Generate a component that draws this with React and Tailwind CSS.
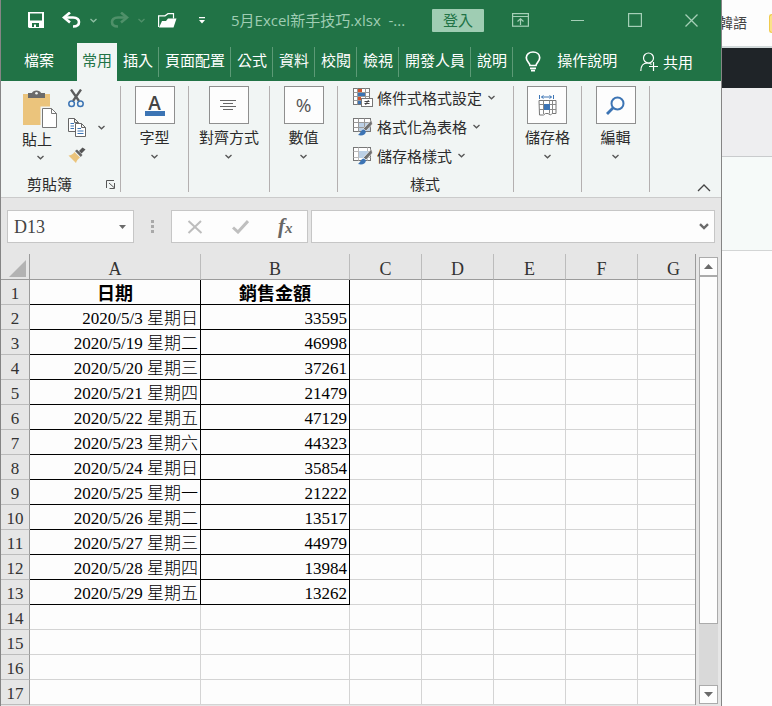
import React, { useState } from 'react';

const tabs = ['插入', '頁面配置', '公式', '資料', '校閱', '檢視', '開發人員', '說明'];

const rows = [
  ['2020/5/3 星期日', '33595'],
  ['2020/5/19 星期二', '46998'],
  ['2020/5/20 星期三', '37261'],
  ['2020/5/21 星期四', '21479'],
  ['2020/5/22 星期五', '47129'],
  ['2020/5/23 星期六', '44323'],
  ['2020/5/24 星期日', '35854'],
  ['2020/5/25 星期一', '21222'],
  ['2020/5/26 星期二', '13517'],
  ['2020/5/27 星期三', '44979'],
  ['2020/5/28 星期四', '13984'],
  ['2020/5/29 星期五', '13262'],
];

const emptyRows = [14, 15, 16, 17];
const emptyCols = ['C', 'D', 'E', 'F', 'G'];

function Chevron({ className = 'text-[#555]' }) {
  return (
    <svg width="7" height="5" viewBox="0 0 7 5" fill="none" stroke="currentColor" strokeWidth="1.3" className={className}>
      <path d="M0.5 1 L3.5 3.8 L6.5 1" />
    </svg>
  );
}

/* Quick access icons */
function SaveIcon() {
  return (
    <svg width="16" height="16" viewBox="0 0 16 16">
      <path fill="#fff" fillRule="evenodd" d="M0 0 H16 V16 H1 L0 15 Z M2 1.5 V8.5 H14 V1.5 Z M4 11 V15 H6 V12.5 H8 V15 H11 V11 Z" />
    </svg>
  );
}

function UndoIcon({ className }) {
  return (
    <svg width="19" height="16" viewBox="0 0 19 16" fill="none" className={className}>
      <path d="M4 5.5 H11 C15.5 5.5 17 8 17 10 C17 13 14.5 14.5 11 14.5" stroke="currentColor" strokeWidth="2.6" />
      <path d="M8 0.5 L2 5.5 L8 10.5" stroke="currentColor" strokeWidth="2.6" />
    </svg>
  );
}

function FolderIcon() {
  return (
    <svg width="19" height="15" viewBox="0 0 19 15">
      <path d="M0.6 14 V2.8 H7 L10 0.7 H15.5 V5.5" fill="none" stroke="#fff" strokeWidth="1.2" />
      <path d="M1 14.5 L4 8 L8 8 L10 5.5 H18.5 L15.5 14.5 Z" fill="#fff" />
    </svg>
  );
}

function RibbonIcon() {
  return (
    <svg width="17" height="14" viewBox="0 0 17 14" fill="none" stroke="currentColor" strokeWidth="1.2">
      <rect x="0.6" y="0.6" width="15.8" height="12.6" />
      <path d="M1 3.5 H16 M8.5 12 V6 M5.5 8.5 L8.5 5.7 L11.5 8.5" />
    </svg>
  );
}

function BulbIcon() {
  return (
    <svg width="16" height="21" viewBox="0 0 16 21" fill="none" stroke="#fff" strokeWidth="1.7">
      <path d="M5 14.5 C5 12 1.3 10.5 1.3 6.8 C1.3 3.4 4.2 1 8 1 C11.8 1 14.7 3.4 14.7 6.8 C14.7 10.5 11 12 11 14.5 Z" />
      <path d="M5 17.3 H11 M6 19.7 H10" />
    </svg>
  );
}

function ShareIcon() {
  return (
    <svg width="19" height="20" viewBox="0 0 19 20" fill="none" stroke="#fff" strokeWidth="1.2">
      <circle cx="8.5" cy="6" r="5" />
      <path d="M0.8 19 C0.8 14 3.5 11 7.5 11 C9.5 11 10.5 11.5 11.5 12.5 M13.5 10 V19 M9 14.5 H18" />
    </svg>
  );
}

/* Clipboard icons */
function PasteIcon() {
  return (
    <svg width="36" height="39" viewBox="0 0 36 39">
      <rect x="1" y="4" width="27" height="31" fill="#ebc47c" />
      <path d="M6 3 H10 C10.5 -0.5 18.5 -0.5 19 3 H23 V8 H6 Z" fill="#6b6b6b" />
      <circle cx="14.5" cy="3.2" r="1.3" fill="#f1f5f4" />
      <path d="M18.5 16.5 H30 V36 H18.5 Z" fill="#f1f5f4" />
      <path d="M20.5 18.5 H29.5 L34.5 23.5 V37.5 H20.5 Z" fill="#fff" stroke="#777" />
      <path d="M29.5 18.5 V23.5 H34.5" fill="none" stroke="#777" />
    </svg>
  );
}

function CutIcon() {
  return (
    <svg width="16" height="19" viewBox="0 0 16 19" fill="none">
      <path d="M3 0.5 L11 12 M13 0.5 L5 12" stroke="#5c5c5c" strokeWidth="2.3" />
      <circle cx="3.6" cy="14.8" r="2.8" stroke="#3c74b4" strokeWidth="1.5" />
      <circle cx="12.4" cy="14.8" r="2.8" stroke="#3c74b4" strokeWidth="1.5" />
    </svg>
  );
}

function CopyIcon() {
  return (
    <svg width="18" height="19" viewBox="0 0 18 19" fill="#fff" stroke="#666">
      <path d="M0.5 0.5 H6.5 L10.5 4.5 V13.5 H0.5 Z M6.5 0.5 V4.5 H10.5" />
      <path d="M2.5 5.5 H6 M2.5 8 H6 M2.5 10.5 H6" stroke="#3c74b4" />
      <path d="M7.5 5.5 H13.5 L17.5 9.5 V18.5 H7.5 Z M13.5 5.5 V9.5 H17.5" />
      <path d="M9.5 10.5 H13 M9.5 13 H15.5 M9.5 15.5 H15.5" stroke="#3c74b4" />
    </svg>
  );
}

function BrushIcon() {
  return (
    <svg width="18" height="16" viewBox="0 0 18 16">
      <path d="M0.5 8.5 C3 8.5 5 7 6.5 5 L12 10.5 C10 12 8.5 14 8 16 Z" fill="#ebc47c" />
      <path d="M7 4 L9 2.5 L14.5 8 L12.8 10 Z" fill="#666" />
      <path d="M11 4 L14.5 0.5 L17.5 2.5 L13.5 6.5 Z" fill="#555" />
    </svg>
  );
}

function LauncherIcon() {
  return (
    <svg width="10" height="9" viewBox="0 0 10 9" fill="none" stroke="#555">
      <path d="M0.5 8 V0.5 H8 M3 3 L8 7.5 M8.5 3 V8.5 H3.5" />
    </svg>
  );
}

/* Style icons */
function ConditionalIcon() {
  return (
    <svg width="20" height="20" viewBox="0 0 20 20">
      <rect x="0.5" y="0.5" width="16" height="16" fill="#fff" stroke="#777" />
      <path d="M0.5 4.5 H16.5 M0.5 8.5 H16.5 M0.5 12.5 H16.5 M4.5 0.5 V16.5 M12.5 0.5 V16.5" stroke="#999" fill="none" />
      <path d="M5 1 H9 V4 H5 Z M5 9 H8 V12 H5 Z" fill="#d2532d" />
      <path d="M5 5 H12 V8 H5 Z M5 13 H8 V16 H5 Z" fill="#3c74b4" />
      <rect x="8.5" y="10.5" width="11" height="8" fill="#fff" stroke="#777" />
      <path d="M11.5 13.5 H16.5 M11.5 15.5 H16.5 M15.5 12 L12.5 17" stroke="#444" />
    </svg>
  );
}

function TableBrush({ children }) {
  return (
    <svg width="20" height="20" viewBox="0 0 20 20">
      <rect x="0.5" y="1.5" width="17" height="13" fill="#fff" stroke="#777" />
      {children}
      <path d="M18.5 3 L19.5 7 L13 14 L10.5 11.5 Z" fill="#707070" stroke="#fff" strokeWidth="0.6" />
      <path d="M5 18 C7.5 16.5 7.5 13 11 12.5 L13 14.5 C12.5 18 9 19.2 5 18 Z" fill="#3c74b4" />
    </svg>
  );
}

function FormatTableIcon() {
  return (
    <TableBrush>
      <path d="M5 6 H17 V14 H5 Z" fill="#bcd0e6" />
      <path d="M0.5 5.5 H17.5 M0.5 10.5 H17.5 M5.5 1.5 V14.5 M11.5 1.5 V14.5" stroke="#999" />
    </TableBrush>
  );
}

function CellStyleIcon() {
  return (
    <TableBrush>
      <path d="M0.5 5.5 H17.5 M0.5 11.5 H17.5 M5.5 1.5 V14.5 M14.5 1.5 V14.5" stroke="#bbb" />
      <path d="M6 5 H15 V12 H6 Z" fill="#bcd0e6" />
    </TableBrush>
  );
}

/* Big button icons */
function AlignIcon() {
  return (
    <svg width="17" height="11" viewBox="0 0 17 11" stroke="#666">
      <path d="M0 0.5 H16 M3 3.5 H13 M0 6.5 H16 M3 9.5 H13" />
    </svg>
  );
}

function CellsIcon() {
  return (
    <svg width="19" height="21" viewBox="0 0 19 21" fill="none">
      <path d="M1.5 0 V4 M15.5 0 V4 M3.5 2 H13.5 M5.5 0.5 L3.5 2 L5.5 3.5 M11.5 0.5 L13.5 2 L11.5 3.5" stroke="#3c74b4" />
      <path d="M1 5.5 H18 V18.5 H14 L12.5 20 L10 18.5 H7.5 L5.5 20 H1.5 Z" fill="#fff" stroke="#777" />
      <path d="M1 9.5 H18 M1 14.5 H18 M5.5 5.5 V19 M11.5 5.5 V18.5 M14.5 5.5 V18.5" stroke="#888" />
      <rect x="6" y="9" width="6" height="6" fill="#3c74b4" />
    </svg>
  );
}

function FindIcon() {
  return (
    <svg width="19" height="19" viewBox="0 0 19 19" fill="none" stroke="#3c74b4">
      <circle cx="11.5" cy="7.5" r="6" strokeWidth="2" />
      <path d="M7.2 11.8 L1 18" strokeWidth="2.8" />
    </svg>
  );
}

function BigButton({ label, className, children }) {
  return (
    <div className={`flex flex-col items-center border-r border-[#b4b0b0] ${className}`}>
      <button type="button" className="flex flex-col items-center">
        <span className="flex h-[38px] w-10 items-center justify-center border border-[#8f8f8f] bg-[#fdfdfd]">{children}</span>
        <span className="mt-[3px] leading-5">{label}</span>
        <span className="mt-[7px]"><Chevron /></span>
      </button>
    </div>
  );
}

function StyleRow({ icon, label }) {
  return (
    <button type="button" className="flex h-[29px] items-center">
      {icon}
      <span className="ml-1 mr-1.5 leading-5">{label}</span>
      <Chevron />
    </button>
  );
}

function TitleBar() {
  return (
    <div className="flex h-10 items-center pl-4 pr-px">
      <button type="button" aria-label="儲存檔案" className="flex w-[38px] justify-center"><SaveIcon /></button>
      <button type="button" aria-label="復原" className="flex w-8 justify-center"><UndoIcon className="text-white" /></button>
      <button type="button" aria-label="復原選項" className="flex w-3 justify-center"><Chevron className="text-[#8fbfa3]" /></button>
      <button type="button" aria-label="重做" className="ml-1 flex w-8 justify-center"><UndoIcon className="-scale-x-100 text-[#4f9069]" /></button>
      <button type="button" aria-label="重做選項" className="flex w-3 justify-center"><Chevron className="text-[#4f9069]" /></button>
      <button type="button" aria-label="開啟" className="flex w-10 justify-center"><FolderIcon /></button>
      <button type="button" aria-label="自訂快速存取工具列" className="flex w-[30px] justify-center">
        <svg width="6" height="7" viewBox="0 0 6 7" fill="#fff"><path d="M0 0 H6 V1.2 H0 Z M0 3 H6 L3 6.5 Z" /></svg>
      </button>
      <h1 className="ml-3.5 min-w-0 flex-1 truncate whitespace-pre text-[15px] leading-5 text-[#9fcdb3]">5月Excel新手技巧.xlsx  -...</h1>
      <button type="button" className="mr-2 h-[23px] w-[52px] rounded-[1px] bg-[#9fcdb3] text-[15px] leading-5 text-[#217346]">登入</button>
      <div className="flex text-[#a5cfb7]">
        <button type="button" aria-label="功能區顯示選項" className="flex w-[57px] justify-center"><RibbonIcon /></button>
        <button type="button" aria-label="最小化" className="flex w-[57px] items-center justify-center">
          <svg width="13" height="13" viewBox="0 0 13 13" stroke="currentColor"><path d="M0 6.5 H13" /></svg>
        </button>
        <button type="button" aria-label="最大化" className="flex w-[57px] items-center justify-center">
          <svg width="14" height="14" viewBox="0 0 14 14" fill="none" stroke="currentColor" strokeWidth="1.2"><rect x="0.6" y="0.6" width="12.8" height="12.8" /></svg>
        </button>
        <button type="button" aria-label="關閉" className="flex w-[57px] items-center justify-center">
          <svg width="13" height="13" viewBox="0 0 13 13" stroke="currentColor" strokeWidth="1.3"><path d="M0.5 0.5 L12.5 12.5 M12.5 0.5 L0.5 12.5" /></svg>
        </button>
      </div>
    </div>
  );
}

function TabBar() {
  return (
    <nav className="flex h-[41px] items-end text-[15px] text-white">
      <button type="button" className="h-[38px] w-[76px] pb-1 leading-5">檔案</button>
      <button type="button" className="h-[38px] w-10 bg-[#f1f5f4] pb-1 leading-5 text-[#217346]">常用</button>
      <div className="flex h-[38px] items-center">
        {tabs.map((tab) => (
          <button key={tab} type="button" className="h-[30px] border-r border-[#5c9a76] pb-1 pl-1.5 pr-[5px] leading-5">{tab}</button>
        ))}
      </div>
      <button type="button" className="ml-3 flex h-[38px] items-center gap-4 pb-0.5">
        <BulbIcon />
        <span className="pb-0.5 leading-5">操作說明</span>
      </button>
      <button type="button" className="ml-auto mr-7 flex h-[38px] items-center gap-1">
        <ShareIcon />
        <span className="leading-5">共用</span>
      </button>
    </nav>
  );
}

function Ribbon() {
  return (
    <div className="flex h-[117px] border-b border-[#cbcbcb] bg-[#f1f5f4] pb-[5px] pt-[5px] text-[15px] text-[#2b2b2b]">
      <div className="flex w-[120px] flex-col justify-between border-r border-[#b4b0b0]">
        <div className="flex pl-[21px]">
          <button type="button" className="flex w-9 flex-col items-center pt-1">
            <PasteIcon />
            <span className="w-9 text-left leading-5">貼上</span>
            <span className="mt-1.5"><Chevron /></span>
          </button>
          <div className="ml-2.5 flex flex-col gap-2.5 pt-[3px]">
            <button type="button" aria-label="剪下"><CutIcon /></button>
            <button type="button" aria-label="複製" className="flex items-center gap-3"><CopyIcon /><Chevron /></button>
            <button type="button" aria-label="複製格式"><BrushIcon /></button>
          </div>
        </div>
        <div className="flex items-center justify-between pl-[26px] pr-1">
          <span className="leading-4">剪貼簿</span>
          <button type="button" aria-label="剪貼簿設定"><LauncherIcon /></button>
        </div>
      </div>
      <BigButton label="字型" className="w-[68px]">
        <span className="flex flex-col items-center">
          <b className="font-['Open_Sans'] text-[19px] font-semibold leading-4 text-[#444]">A</b>
          <span className="h-[5px] w-5 bg-[#3c74b4]" />
        </span>
      </BigButton>
      <BigButton label="對齊方式" className="w-[81px]"><AlignIcon /></BigButton>
      <BigButton label="數值" className="w-[68px]">
        <span className="font-['Open_Sans'] text-[19px] leading-5 text-[#555]">%</span>
      </BigButton>
      <div className="flex w-[176px] flex-col justify-between border-r border-[#b4b0b0] pl-[15px]">
        <div className="-mt-[3px] flex flex-col items-start">
          <StyleRow icon={<ConditionalIcon />} label="條件式格式設定" />
          <StyleRow icon={<FormatTableIcon />} label="格式化為表格" />
          <StyleRow icon={<CellStyleIcon />} label="儲存格樣式" />
        </div>
        <span className="pr-4 text-center leading-4">樣式</span>
      </div>
      <BigButton label="儲存格" className="w-[68px]"><CellsIcon /></BigButton>
      <BigButton label="編輯" className="w-[68px]"><FindIcon /></BigButton>
      <button type="button" aria-label="摺疊功能區" className="ml-auto mr-2.5 self-end">
        <svg width="14" height="8" viewBox="0 0 14 8" fill="none" stroke="#444" strokeWidth="1.3"><path d="M1 7 L7 1 L13 7" /></svg>
      </button>
    </div>
  );
}

function FormulaBar() {
  const [cell, setCell] = useState('D13');
  const [formula, setFormula] = useState('');

  return (
    <div className="flex items-center pb-[11px] pl-1.5 pr-1.5 pt-3">
      <div className="flex h-[33px] w-[127px] items-center border border-[#c6c6c6] bg-[#fdfdfd] pl-1.5 pr-[7px]">
        <input
          aria-label="名稱方塊"
          value={cell}
          onChange={(e) => setCell(e.target.value)}
          className="min-w-0 flex-1 bg-transparent pt-0.5 font-['Liberation_Serif'] text-[18px] text-[#444] outline-none"
        />
        <button type="button" aria-label="名稱清單">
          <svg width="7" height="4" viewBox="0 0 7 4" fill="#6a6a6a"><path d="M0 0 H7 L3.5 4 Z" /></svg>
        </button>
      </div>
      <svg width="3" height="13" viewBox="0 0 3 13" fill="#a9a9a9" className="mx-[17px]">
        <path d="M0 0 H3 V3 H0 Z M0 5 H3 V8 H0 Z M0 10 H3 V13 H0 Z" />
      </svg>
      <div className="flex h-[33px] w-[137px] items-center justify-around border border-[#c6c6c6] bg-[#fdfdfd]">
        <button type="button" aria-label="取消">
          <svg width="16" height="14" viewBox="0 0 16 14" stroke="#bdbdbd" strokeWidth="2"><path d="M1.5 1 L14.5 13 M14 1 L1.5 13" /></svg>
        </button>
        <button type="button" aria-label="輸入">
          <svg width="17" height="14" viewBox="0 0 17 14" fill="none" stroke="#bfbfbf" strokeWidth="3"><path d="M1 7.5 L6 12 L16 1" /></svg>
        </button>
        <button type="button" className="font-['Liberation_Serif'] text-[21px] font-bold italic leading-5 text-[#666]">
          f<span className="text-[15px]">x</span>
        </button>
      </div>
      <div className="ml-[3px] flex h-[33px] flex-1 items-center border border-[#c6c6c6] bg-[#fdfdfd] pr-[5px]">
        <input
          aria-label="資料編輯列"
          value={formula}
          onChange={(e) => setFormula(e.target.value)}
          className="min-w-0 flex-1 bg-transparent px-1 outline-none"
        />
        <button type="button" aria-label="展開資料編輯列">
          <svg width="10" height="7" viewBox="0 0 10 7" fill="none" stroke="#6a6a6a" strokeWidth="2.4"><path d="M1 1.2 L5 5 L9 1.2" /></svg>
        </button>
      </div>
    </div>
  );
}

function RowHeader({ n }) {
  return (
    <th scope="row" className="border-b border-r border-b-[#bcbcbc] border-r-[#9b9b9b] bg-[#e6e6e6] pt-1 font-normal text-[#333]">{n}</th>
  );
}

function EmptyCells({ cols }) {
  return cols.map((c) => <td key={c} className="border-b border-r border-[#d4d4d4]" />);
}

function Sheet() {
  return (
    <div className="min-w-0 flex-1 overflow-hidden border-r border-[#9b9b9b]">
      <table className="w-[709px] table-fixed border-separate border-spacing-0 bg-[#fdfdfd] font-['Liberation_Serif','Noto_Sans_CJK_TC',serif] text-[17px] leading-5 text-black">
        <colgroup>
          <col className="w-[29px]" />
          <col className="w-[171px]" />
          <col className="w-[149px]" />
          {emptyCols.map((c) => <col key={c} className="w-[72px]" />)}
        </colgroup>
        <thead>
          <tr className="h-[26px] bg-[#e6e6e6] text-[18px] text-[#333]">
            <td className="border-b border-r border-[#9b9b9b]">
              <svg width="17" height="17" viewBox="0 0 17 17" fill="#b3b3b3" className="ml-2 mt-1"><path d="M17 0 V17 H0 Z" /></svg>
            </td>
            {['A', 'B', ...emptyCols].map((c) => (
              <th key={c} scope="col" className="border-b border-r border-b-[#9b9b9b] border-r-[#bcbcbc] pt-1 font-normal">{c}</th>
            ))}
          </tr>
        </thead>
        <tbody>
          <tr className="h-[25px]">
            <RowHeader n={1} />
            <td className="border-b border-r border-black pt-1 text-center text-[18px] font-bold">日期</td>
            <td className="border-b border-r border-black pt-1 text-center text-[18px] font-bold">銷售金額</td>
            <EmptyCells cols={emptyCols} />
          </tr>
          {rows.map(([date, amount], i) => (
            <tr key={date} className="h-[25px]">
              <RowHeader n={i + 2} />
              <td className="whitespace-nowrap border-b border-r border-black pr-0.5 pt-1 text-right font-light">{date}</td>
              <td className="border-b border-r border-black pr-0.5 pt-1 text-right">{amount}</td>
              <EmptyCells cols={emptyCols} />
            </tr>
          ))}
          {emptyRows.map((n) => (
            <tr key={n} className="h-[25px]">
              <RowHeader n={n} />
              <EmptyCells cols={['A', 'B', ...emptyCols]} />
            </tr>
          ))}
        </tbody>
      </table>
    </div>
  );
}

function ScrollBar() {
  return (
    <div className="flex flex-col px-[3px] pb-px pt-[3px]">
      <button type="button" aria-label="向上捲動" className="flex h-[19px] w-[19px] items-center justify-center border border-[#ababab] bg-[#fdfdfd]">
        <svg width="9" height="5" viewBox="0 0 9 5" fill="#6a6a6a"><path d="M0 5 H9 L4.5 0 Z" /></svg>
      </button>
      <div className="flex flex-1 flex-col bg-[#d9d9d9]">
        <div className="h-[85%] border border-[#ababab] bg-[#fdfdfd]" />
      </div>
      <button type="button" aria-label="向下捲動" className="flex h-[19px] w-[19px] items-center justify-center border border-[#ababab] bg-[#fdfdfd]">
        <svg width="9" height="5" viewBox="0 0 9 5" fill="#6a6a6a"><path d="M0 0 H9 L4.5 5 Z" /></svg>
      </button>
    </div>
  );
}

/* Strip of the web page behind the window */
function PageBehind() {
  return (
    <aside className="flex w-[50px] shrink-0 flex-col bg-[#fdfdfd]">
      <div className="flex h-12 items-center justify-end overflow-hidden border-b-2 border-[#d3dadb]">
        <a href="#korean" className="shrink-0 whitespace-nowrap text-[14px] leading-5 text-[#444]">韓語</a>
        <span className="ml-[22px] h-[19px] w-[3px] shrink-0 rounded-l-sm border border-r-0 border-[#f0cb4e] bg-[#fbe28a]" />
      </div>
      <div className="h-10 bg-[#1f2428]" />
      <div className="h-[69px] border-b border-[#c9cbcd] bg-[#eeeef0]" />
      <div className="h-[94px] border-b border-[#d3d5d5] bg-[#f6faf9]" />
    </aside>
  );
}

function App() {
  return (
    <div className="flex min-h-screen bg-[#fdfdfd] font-['Open_Sans','Noto_Sans_CJK_TC',sans-serif]">
      <main className="flex min-w-0 flex-1 flex-col border-x border-[#858585] bg-[#e6e6e6]">
        <header className="bg-[#217346]">
          <TitleBar />
          <TabBar />
        </header>
        <Ribbon />
        <FormulaBar />
        <div className="flex">
          <Sheet />
          <ScrollBar />
        </div>
      </main>
      <PageBehind />
    </div>
  );
}

export default App;
